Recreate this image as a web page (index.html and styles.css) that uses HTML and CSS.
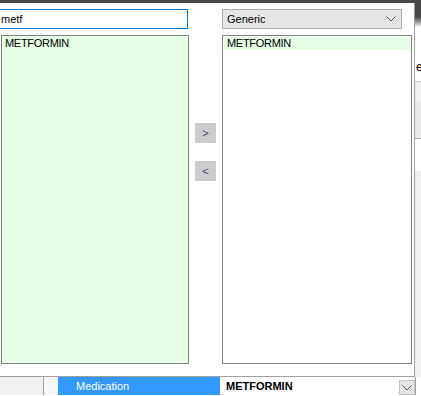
FILE: index.html
```html
<!DOCTYPE html>
<html>

<head>
    <meta charset='utf-8'>
    <title>Medication search</title>
    <link rel="stylesheet" href="styles.css">
</head>

<body>
    <div class="top_bar"></div>
    <div class="main">
        <div class="dialog">
            <div class="col_left">
                <input type="text" class="search" value="metf">
                <ul class="list list_green">
                    <li>METFORMIN</li>
                </ul>
            </div>
            <div class="col_mid">
                <button class="btn_move">&gt;</button>
                <button class="btn_move">&lt;</button>
            </div>
            <div class="col_right">
                <div class="select">
                    <span>Generic</span>
                    <svg width="10" height="6" viewBox="0 0 10 6"><path d="M0.5 0.5 L5 5 L9.5 0.5" fill="none" stroke="#555" stroke-width="1"/></svg>
                </div>
                <ul class="list">
                    <li class="selected">METFORMIN</li>
                </ul>
            </div>
        </div>
        <div class="side">
            <div class="side_shadow"></div>
            <div class="side_text">e</div>
            <div class="side_box"></div>
            <div class="side_box2"></div>
            <div class="side_gray"></div>
        </div>
    </div>
    <div class="bottom_row">
        <div class="cell_head"></div>
        <div class="cell_pad"></div>
        <div class="cell_label">Medication</div>
        <div class="cell_value">METFORMIN</div>
        <div class="cell_drop">
            <svg width="10" height="6" viewBox="0 0 10 6"><path d="M0.5 0.5 L5 5 L9.5 0.5" fill="none" stroke="#555" stroke-width="1"/></svg>
        </div>
        <div class="cell_end"></div>
    </div>
</body>

</html>
```

FILE: styles.css
```css
* {
    margin: 0;
    padding: 0;
    box-sizing: border-box;
}

body {
    width: 421px;
    height: 396px;
    overflow: hidden;
    background-color: white;
    font-family: "Liberation Sans", Arial, sans-serif;
    font-size: 11px;
    color: #000;
}

.top_bar {
    height: 3px;
    background-color: #474747;
}

.main {
    display: flex;
    height: 374px;
    border-bottom: 1px solid #a0a0a0;
}

.dialog {
    width: 415px;
    border-right: 1px solid #a0a0a0;
    display: flex;
    padding-top: 6px;
}

.col_left {
    width: 189px;
    display: flex;
    flex-direction: column;
    gap: 6px;
}

.search {
    width: 188px;
    height: 20px;
    border: 1px solid #0078d7;
    border-left: none;
    outline: none;
    font-family: inherit;
    font-size: 11px;
    padding-left: 1px;
}

.list {
    list-style-type: none;
    height: 329px;
    border: 1px solid #828282;
    padding: 1px;
}

.list li {
    height: 13px;
    line-height: 13px;
    padding-left: 3px;
    letter-spacing: -0.3px;
}

.list_green {
    background-color: #e6fde6;
    margin-left: 1px;
}

.list_green li {
    padding-left: 2px;
}

.list .selected {
    background-color: #e6fde6;
}

.col_mid {
    width: 33px;
    display: flex;
    flex-direction: column;
    align-items: center;
    gap: 18px;
    padding-top: 114px;
}

.btn_move {
    width: 21px;
    height: 20px;
    border: none;
    background-color: #cccccc;
    color: #3b4a78;
    font-family: inherit;
    font-size: 11px;
}

.col_right {
    width: 190px;
    display: flex;
    flex-direction: column;
    gap: 6px;
}

.select {
    width: 180px;
    height: 20px;
    background-color: #e5e5e5;
    border: 1px solid #adadad;
    display: flex;
    align-items: center;
    justify-content: space-between;
    padding: 0 5px 0 4px;
}

.side {
    width: 6px;
    position: relative;
    background-color: white;
}

.side_shadow {
    height: 24px;
    background: linear-gradient(#474747 0, #474747 14px, #9a9a9a 19px, white 24px);
}

.side_text {
    position: absolute;
    top: 57px;
    left: 1px;
    font-size: 12px;
}

.side_box {
    position: absolute;
    top: 78px;
    left: 0;
    width: 6px;
    height: 20px;
    background-color: #f0f0f0;
    border-top: 1px solid #c8c8c8;
}

.side_box2 {
    position: absolute;
    top: 98px;
    left: 0;
    width: 6px;
    height: 38px;
    background-color: #e8e8e8;
    border-bottom: 1px solid #b0b0b0;
}

.side_gray {
    position: absolute;
    top: 168px;
    left: 0;
    width: 6px;
    height: 206px;
    background-color: #f0f0f0;
}

.bottom_row {
    display: flex;
    height: 18px;
}

.cell_head {
    width: 44px;
    background-color: #f0f0f0;
    border-right: 1px solid #a0a0a0;
}

.cell_pad {
    width: 14px;
    background-color: #f5f7fa;
}

.cell_label {
    width: 162px;
    background-color: #3399ff;
    color: white;
    padding-left: 18px;
    line-height: 18px;
}

.cell_value {
    width: 179px;
    font-weight: bold;
    padding-left: 6px;
    line-height: 18px;
}

.cell_drop {
    width: 16px;
    height: 15px;
    margin-top: 3px;
    background-color: #e5e5e5;
    border: 1px solid #c4c4c4;
    display: flex;
    align-items: center;
    justify-content: center;
}

.cell_end {
    width: 6px;
    border-left: 1px solid #a0a0a0;
}
```
